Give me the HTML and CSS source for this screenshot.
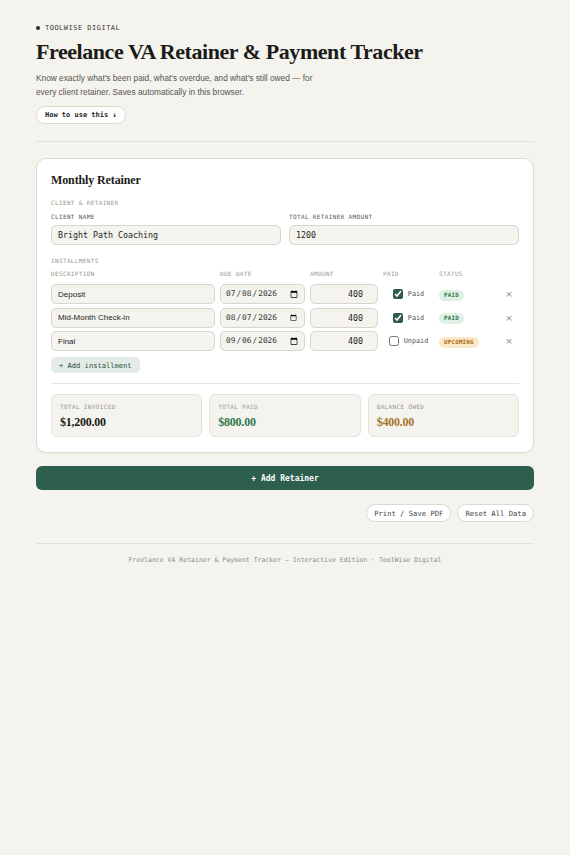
FILE: index.html
```html
<!DOCTYPE html>
<html lang="en">
<head>
<meta charset="utf-8">
<title>Freelance VA Retainer &amp; Payment Tracker</title>
<link rel="stylesheet" href="styles.css">
</head>
<body>
<div class="page">
  <header class="hero">
    <div class="brand"><span class="dot"></span>TOOLWISE DIGITAL</div>
    <h1 class="title">Freelance VA Retainer &amp; Payment Tracker</h1>
    <p class="lede">Know exactly what's been paid, what's overdue, and what's still owed — for every client retainer. Saves automatically in this browser.</p>
    <button class="pill-btn how">How to use this ↓</button>
  </header>
  <hr class="rule">
  <section class="card">
    <h2 class="card-title">Monthly Retainer</h2>
    <div class="section-label">CLIENT &amp; RETAINER</div>
    <div class="client-grid">
      <label class="field">
        <span class="field-label">CLIENT NAME</span>
        <input class="inp mono" type="text" value="Bright Path Coaching">
      </label>
      <label class="field">
        <span class="field-label">TOTAL RETAINER AMOUNT</span>
        <input class="inp mono" type="text" value="1200">
      </label>
    </div>
    <div class="section-label inst-label">INSTALLMENTS</div>
    <div class="inst-grid head">
      <span>DESCRIPTION</span><span>DUE DATE</span><span>AMOUNT</span><span>PAID</span><span>STATUS</span><span></span>
    </div>
    <div class="rows">
      <div class="inst-grid row">
        <input class="inp sans" type="text" value="Deposit">
        <input class="inp date" type="date" value="2026-07-08">
        <input class="inp mono num" type="number" value="400">
        <label class="paid"><input type="checkbox" checked><span>Paid</span></label>
        <span><span class="badge paid-b">PAID</span></span>
        <button class="x">×</button>
      </div>
      <div class="inst-grid row">
        <input class="inp sans" type="text" value="Mid-Month Check-in">
        <input class="inp date" type="date" value="2026-08-07">
        <input class="inp mono num" type="number" value="400">
        <label class="paid"><input type="checkbox" checked><span>Paid</span></label>
        <span><span class="badge paid-b">PAID</span></span>
        <button class="x">×</button>
      </div>
      <div class="inst-grid row">
        <input class="inp sans" type="text" value="Final">
        <input class="inp date" type="date" value="2026-09-06">
        <input class="inp mono num" type="number" value="400">
        <label class="paid"><input type="checkbox"><span>Unpaid</span></label>
        <span><span class="badge up-b">UPCOMING</span></span>
        <button class="x">×</button>
      </div>
    </div>
    <button class="add-inst">+ Add installment</button>
    <hr class="inner-rule">
    <div class="summary">
      <div class="sum-box"><div class="sum-label">TOTAL INVOICED</div><div class="sum-val">$1,200.00</div></div>
      <div class="sum-box"><div class="sum-label">TOTAL PAID</div><div class="sum-val green">$800.00</div></div>
      <div class="sum-box"><div class="sum-label">BALANCE OWED</div><div class="sum-val amber">$400.00</div></div>
    </div>
  </section>
  <button class="add-ret">+ Add Retainer</button>
  <div class="actions">
    <button class="pill-btn act">Print / Save PDF</button>
    <button class="pill-btn act">Reset All Data</button>
  </div>
  <hr class="rule foot-rule">
  <footer class="footer">Freelance VA Retainer &amp; Payment Tracker — Interactive Edition · ToolWise Digital</footer>
</div>
</body>
</html>
```
FILE: styles.css
```css
* { box-sizing: border-box; }
html, body { margin: 0; padding: 0; background: #f4f3ee; }
body { font-family: "DejaVu Sans Mono", monospace; color: #1e1f1b; }
.page { padding: 23px 36px 40px; }

.brand { display: flex; align-items: center; gap: 5px; font-size: 7px; line-height: 10px; letter-spacing: 0.07em; color: #3a3b36; }
.dot { width: 4px; height: 4px; border-radius: 50%; background: #2b2c28; }
.title { margin: 6px 0 0; font-family: "Liberation Serif", serif; font-weight: 700; font-size: 22px; line-height: 25px; letter-spacing: -0.02em; color: #1b1c18; }
.lede { margin: 7px 0 0; max-width: 292px; font-family: "Liberation Sans", sans-serif; font-size: 8.3px; line-height: 14px; color: #55554f; }
.pill-btn { font-family: "DejaVu Sans Mono", monospace; background: #fff; border: 1px solid #dcd9d0; border-radius: 10px; cursor: pointer; }
.how { margin-top: 7px; height: 18px; padding: 0 8px; font-size: 7px; font-weight: 700; color: #222; }
.rule { border: 0; border-top: 1px solid #e3e0d7; margin: 17px 0 16px; }

.card { background: #fff; border: 1px solid #dedbd1; border-radius: 10px; padding: 14px 14px 15px; box-shadow: 0 1px 2px rgba(0,0,0,0.05); }
.card-title { margin: 0 0 12px; font-family: "Liberation Serif", serif; font-weight: 700; font-size: 12px; line-height: 14px; letter-spacing: -0.01em; color: #1b1c18; }
.section-label { font-size: 6px; line-height: 8px; letter-spacing: 0.06em; color: #9a978e; }
.client-grid { display: grid; grid-template-columns: 1fr 1fr; gap: 8px; margin-top: 6px; }
.field { display: flex; flex-direction: column; gap: 4px; }
.field-label { font-size: 6px; line-height: 8px; letter-spacing: 0.06em; color: #55554f; }

.inp { height: 20px; width: 100%; border: 1px solid #d8d5cb; border-radius: 5px; background: #f4f3ee; padding: 0 6px; color: #1e1f1b; outline: none; margin: 0; }
.mono { font-family: "DejaVu Sans Mono", monospace; font-size: 8.3px; }
.sans { font-family: "Liberation Sans", sans-serif; font-size: 8px; }
.date { font-family: "DejaVu Sans Mono", monospace; font-size: 7.8px; padding: 0 4px; color: #333; }
.num { text-align: right; padding-right: 14px; -moz-appearance: textfield; }
.num::-webkit-inner-spin-button, .num::-webkit-outer-spin-button { -webkit-appearance: none; margin: 0; }

.inst-label { margin-top: 11.5px; }
.inst-grid { display: grid; grid-template-columns: 164px 85px 68px 51px 1fr 20px; column-gap: 5px; align-items: center; }
.head { margin-top: 5.5px; font-size: 6px; line-height: 8px; letter-spacing: 0.06em; color: #9a978e; }
.rows { display: flex; flex-direction: column; gap: 3.5px; margin-top: 6px; }
.paid { display: flex; align-items: center; justify-content: center; gap: 5px; font-size: 6.8px; color: #55554f; }
.paid input { width: 10px; height: 10px; margin: 0; accent-color: #2d5e4d; }
.badge { display: inline-block; height: 11px; line-height: 11px; padding: 0 5px; border-radius: 6px; font-size: 5.8px; font-weight: 700; letter-spacing: 0.04em; vertical-align: middle; }
.paid-b { background: #dff0e4; color: #2f7a4f; }
.up-b { background: #fbe8c7; color: #a66b16; }
.x { background: none; border: 0; padding: 0; font-family: "DejaVu Sans", sans-serif; font-size: 9px; color: #8a8983; cursor: pointer; }

.add-inst { margin-top: 6px; height: 16px; padding: 0 8px; border: 0; border-radius: 5px; background: #e2ebe5; font-family: "DejaVu Sans Mono", monospace; font-size: 7.1px; color: #2b4a3e; }
.inner-rule { border: 0; border-top: 1px solid #e6e3da; margin: 10px 0 10px; }
.summary { display: grid; grid-template-columns: repeat(3, 1fr); gap: 7px; }
.sum-box { background: #f4f3ee; border: 1px solid #e6e3da; border-radius: 6px; padding: 7.5px 8px 9px; height: 43px; }
.sum-label { font-size: 6px; line-height: 8px; letter-spacing: 0.06em; color: #9a978e; }
.sum-val { margin-top: 4px; font-family: "Liberation Serif", serif; font-weight: 700; font-size: 12px; line-height: 14px; letter-spacing: -0.02em; color: #1b1c18; }
.green { color: #2f7a4f; }
.amber { color: #a47628; }

.add-ret { display: block; width: 100%; margin-top: 13px; height: 24px; border: 0; border-radius: 6px; background: #2e5e4e; color: #fff; font-family: "DejaVu Sans Mono", monospace; font-size: 8px; font-weight: 700; cursor: pointer; }
.actions { display: flex; justify-content: flex-end; gap: 6px; margin-top: 14px; }
.act { height: 18px; padding: 0 7px; font-size: 7.2px; color: #444; }
.foot-rule { margin: 21px 0 0; }
.footer { padding-top: 12px; text-align: center; font-size: 6.5px; line-height: 9px; color: #8d8c86; }
```
